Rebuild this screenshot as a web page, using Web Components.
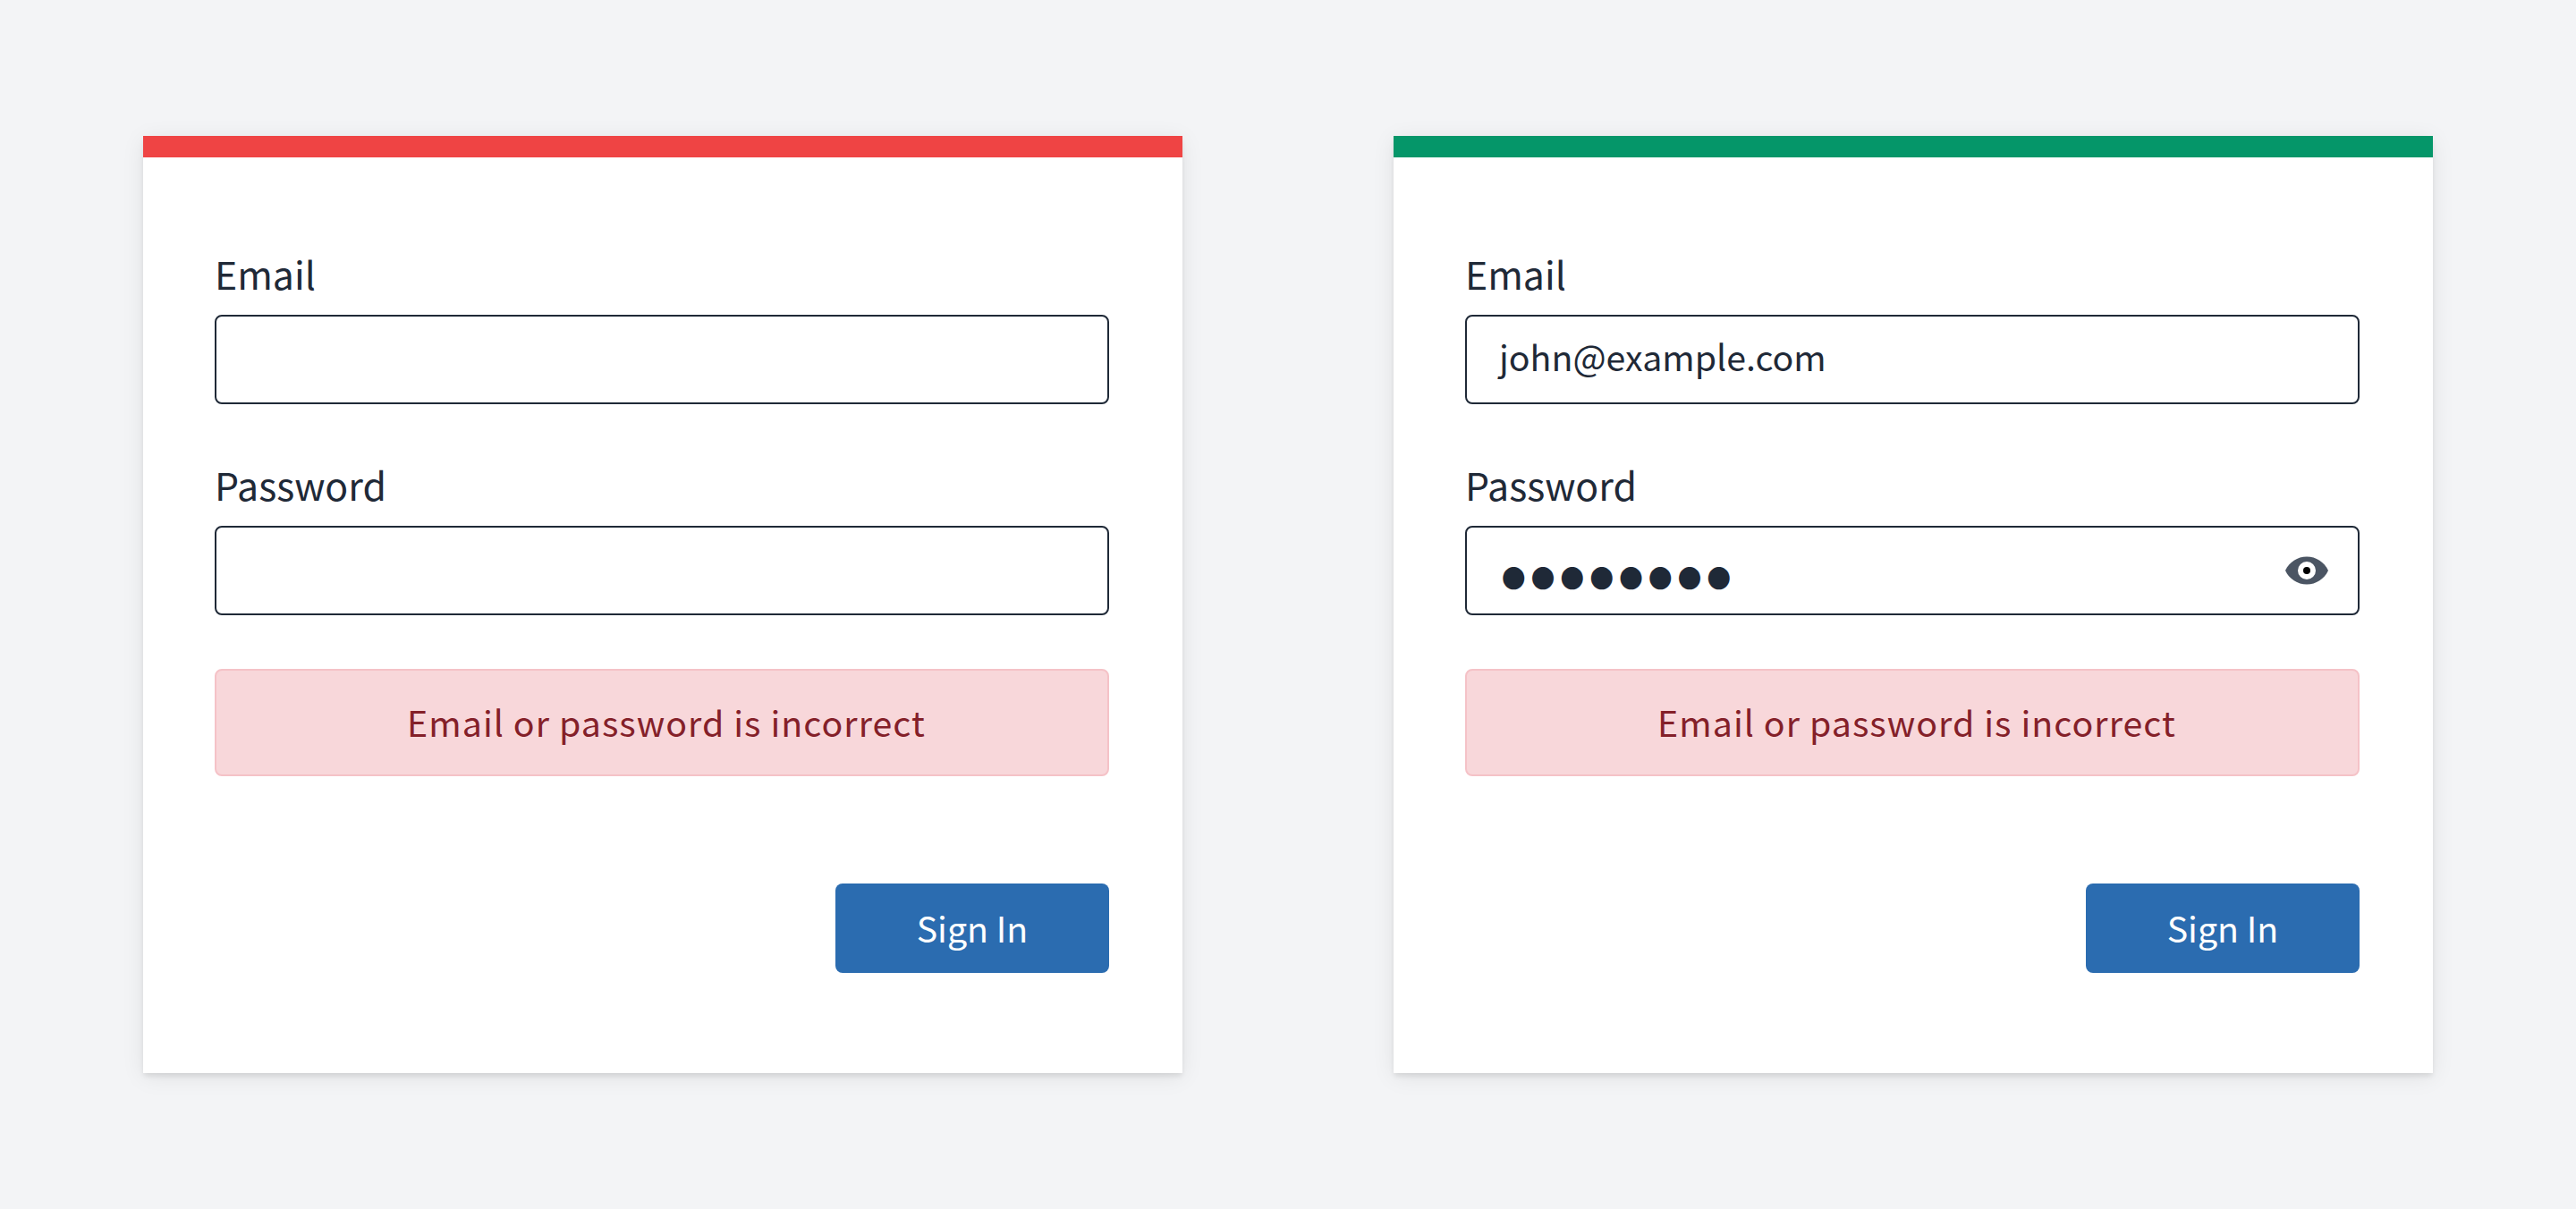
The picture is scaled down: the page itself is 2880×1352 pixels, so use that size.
<!DOCTYPE html>
<html lang="en">
<head>
<meta charset="utf-8">
<title>Sign in</title>
<style>
  html, body { margin: 0; height: 100%; }
  body {
    background-color: #f3f4f6;
    color: #1f2937;
    font-family: "Noto Sans CJK SC", "Noto Sans", sans-serif;
  }
  main {
    display: grid;
    grid-template-columns: 1162px 1162px;
    column-gap: 236px;
    padding: 152px 160px;
  }
  .dots {
    display: inline-block;
    font-size: 26.5px;
    letter-spacing: 6.3px;
    line-height: 1;
    transform: translate(3px, 6px) scaleY(1.06);
  }
</style>
</head>
<body>
<main>
  <login-card accent="#ef4444">
    <form-field label="Email"></form-field>
    <form-field label="Password"></form-field>
    <alert-box>Email or password is incorrect</alert-box>
    <sign-in-button>Sign In</sign-in-button>
  </login-card>
  <login-card accent="#059669">
    <form-field label="Email">john@example.com</form-field>
    <form-field label="Password">
      <span class="dots">●●●●●●●●</span>
      <eye-icon slot="end"></eye-icon>
    </form-field>
    <alert-box>Email or password is incorrect</alert-box>
    <sign-in-button>Sign In</sign-in-button>
  </login-card>
</main>

<script>
class LoginCard extends HTMLElement {
  constructor() {
    super();
    this.shadowDOM = this.attachShadow({ mode: 'open' });
  }

  connectedCallback() {
    this.shadowDOM.innerHTML = `
      <style>
        :host {
          display: block;
          height: 1048px;
          background-color: #fff;
          box-shadow: 0 4px 6px -1px rgba(0, 0, 0, 0.1), 0 4px 24px 0 rgba(0, 0, 0, 0.08);
        }
        .stripe {
          height: 24px;
          background-color: ${this.getAttribute('accent')};
        }
        .body {
          width: 1000px;
          padding: 100px 0 0 80px;
          display: flex;
          flex-direction: column;
        }
      </style>
      <div class="stripe"></div>
      <div class="body"><slot></slot></div>
    `;
  }
}

class FormField extends HTMLElement {
  constructor() {
    super();
    this.shadowDOM = this.attachShadow({ mode: 'open' });
  }

  connectedCallback() {
    this.shadowDOM.innerHTML = `
      <style>
        :host {
          display: block;
          margin-bottom: 60px;
        }
        .label {
          font-size: 42.8px;
          line-height: 59px;
          margin-bottom: 17px;
        }
        .input {
          box-sizing: border-box;
          height: 100px;
          padding: 0 33px 0 36px;
          border: 2px solid #1f2937;
          border-radius: 8px;
          display: flex;
          align-items: center;
          justify-content: space-between;
          font-size: 39.3px;
        }
        .value {
          padding-bottom: 10px;
        }
      </style>
      <div class="label">${this.getAttribute('label')}</div>
      <div class="input"><span class="value"><slot></slot></span><slot name="end"></slot></div>
    `;
  }
}

class AlertBox extends HTMLElement {
  constructor() {
    super();
    this.attachShadow({ mode: 'open' }).innerHTML = `
      <style>
        :host {
          display: flex;
          box-sizing: border-box;
          height: 120px;
          padding: 0 0 3px 10px;
          align-items: center;
          justify-content: center;
          border: 2px solid #f5c2c7;
          border-radius: 8px;
          background-color: #f8d7da;
          color: #842029;
          font-size: 39.3px;
          letter-spacing: 1.06px;
        }
      </style>
      <slot></slot>
    `;
  }
}

class SignInButton extends HTMLElement {
  constructor() {
    super();
    this.attachShadow({ mode: 'open' }).innerHTML = `
      <style>
        :host {
          display: flex;
          box-sizing: border-box;
          width: 306px;
          height: 100px;
          margin: 120px 0 0 auto;
          padding-bottom: 3px;
          align-items: center;
          justify-content: center;
          border-radius: 8px;
          background-color: #2b6cb0;
          color: #fff;
          font-size: 39.3px;
        }
      </style>
      <slot></slot>
    `;
  }
}

class EyeIcon extends HTMLElement {
  constructor() {
    super();
    this.attachShadow({ mode: 'open' }).innerHTML = `
      <style>
        :host { display: flex; }
      </style>
      <svg width="48" height="32" viewBox="0 0 48 32">
        <path fill="#4b5563" d="M0 16C4.500 6.500 13.500 0.500 24 0.500S43.500 6.500 48 16C43.500 25.500 34.500 31.500 24 31.500S4.500 25.500 0 16Z"/>
        <circle cx="24" cy="16" r="10" fill="#fff"/>
        <circle cx="24" cy="16" r="4" fill="#000"/>
      </svg>
    `;
  }
}

customElements.define('login-card', LoginCard);
customElements.define('form-field', FormField);
customElements.define('alert-box', AlertBox);
customElements.define('sign-in-button', SignInButton);
customElements.define('eye-icon', EyeIcon);
</script>
</body>
</html>
